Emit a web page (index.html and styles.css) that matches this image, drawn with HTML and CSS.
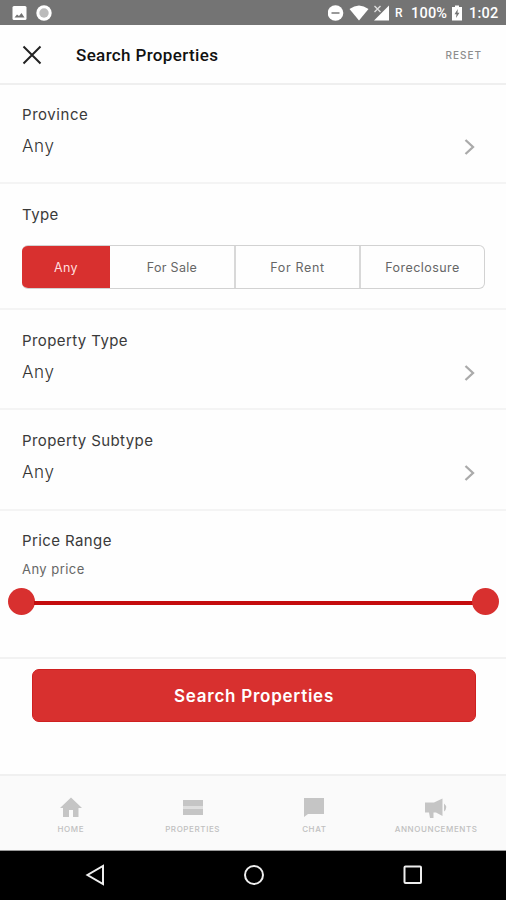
FILE: index.html
```html
<!DOCTYPE html>
<html lang="en">
<head>
<meta charset="utf-8">
<title>Search Properties</title>
<link rel="stylesheet" href="styles.css">
</head>
<body>
<div class="status">
  <svg class="status-left" width="60" height="25" viewBox="0 0 60 25">
    <rect x="12.5" y="6" width="14" height="14" rx="1.5" fill="#fff"/>
    <path d="M14.500 17.500l2.500-3 2 1.500 2.500-3 3 4.500z" fill="#747474"/>
    <circle cx="44" cy="13" r="7.7" fill="#fff"/>
    <circle cx="44" cy="13" r="4.7" fill="#bbb"/>
  </svg>
  <svg class="status-icons" width="66" height="25" viewBox="0 0 66 25">
    <circle cx="7.500" cy="13" r="7.800" fill="#fff"/>
    <path d="M3.500 13h8" stroke="#999" stroke-width="2"/>
    <path d="M21.500 9q9.500-7 19 0l-9.500 11.500z" fill="#fff"/>
    <path d="M61 5.500V20.500H46z" fill="#fff"/>
    <path d="M46.500 6l6 6m0-6l-6 6" stroke="#ddd" stroke-width="1.400"/>
  </svg>
  <span class="roam">R</span>
  <span class="percent">100%</span>
  <svg class="battery" width="10" height="25" viewBox="0 0 10 25">
    <path d="M3 5.500h4V7h3v13.500H0V7h3z" fill="#fff"/>
    <path d="M5.800 9L2.500 14.200h2L4 18l3.500-5.200h-2z" fill="#747474"/>
  </svg>
  <span class="clock">1:02</span>
</div>
<header class="header">
  <svg class="close" width="20" height="20" viewBox="0 0 20 20"><path d="M1.500 1.500l17 17m0-17l-17 17" stroke="#222" stroke-width="2"/></svg>
  <h1 class="title">Search Properties</h1>
  <span class="reset">RESET</span>
</header>
<main>
  <section class="row">
    <div><div class="label province">Province</div><div class="value">Any</div></div>
    <svg class="chevron" width="12" height="18" viewBox="0 0 12 18"><path d="M1.500 2l7.500 7-7.500 7" fill="none" stroke="#aaa" stroke-width="2.300"/></svg>
  </section>
  <section class="type">
    <div class="label">Type</div>
    <div class="segments">
      <span class="seg active">Any</span>
      <span class="seg">For Sale</span>
      <span class="seg rent">For Rent</span>
      <span class="seg foreclosure">Foreclosure</span>
    </div>
  </section>
  <section class="row lower">
    <div><div class="label">Property Type</div><div class="value">Any</div></div>
    <svg class="chevron" width="12" height="18" viewBox="0 0 12 18"><path d="M1.500 2l7.500 7-7.500 7" fill="none" stroke="#aaa" stroke-width="2.300"/></svg>
  </section>
  <section class="row lower subtype">
    <div><div class="label">Property Subtype</div><div class="value">Any</div></div>
    <svg class="chevron" width="12" height="18" viewBox="0 0 12 18"><path d="M1.500 2l7.500 7-7.500 7" fill="none" stroke="#aaa" stroke-width="2.300"/></svg>
  </section>
  <section class="price">
    <div class="label">Price Range</div>
    <div class="price-value">Any price</div>
    <div class="slider"><span class="knob"></span><span class="track"></span><span class="knob"></span></div>
  </section>
  <div class="action"><div class="button">Search Properties</div></div>
</main>
<nav class="tabs">
  <div class="tab"><svg width="24" height="24" viewBox="0 0 24 24"><path d="M10 21v-7h4v7h5.500v-9H23L12 1.500 1 12h3v9z"/></svg><span>HOME</span></div>
  <div class="tab"><svg width="24" height="24" viewBox="0 0 24 24"><path d="M2 4h20v6H2zM2 12.500h20V19H2z"/><path d="M2 10h20v2.500H2z" fill="#dedede"/></svg><span>PROPERTIES</span></div>
  <div class="tab"><svg width="24" height="24" viewBox="0 0 24 24"><path d="M2 2h20v16H6l-4 3z"/></svg><span>CHAT</span></div>
  <div class="tab"><svg width="24" height="24" viewBox="0 0 24 24"><path d="M1 6.500h9l8.500-4V20L12 16.500H9.500V22H6l-1-5.500H1zM20 7.500q4.500 4 0 8z"/></svg><span>ANNOUNCEMENTS</span></div>
</nav>
<div class="navbar">
  <svg width="20" height="22" viewBox="0 0 20 22"><path d="M18 2v18L2.500 11z"/></svg>
  <svg width="22" height="22" viewBox="0 0 22 22"><circle cx="11" cy="11" r="9"/></svg>
  <svg width="20" height="22" viewBox="0 0 20 22"><rect x="1.500" y="2.500" width="16.500" height="16.500" rx="1"/></svg>
</div>
</body>
</html>
```

FILE: styles.css
```css
* { box-sizing: border-box; }
body { margin: 0; width: 506px; height: 900px; overflow: hidden; background: #fefefe; color: #3c3c3c; font-family: Inter, "Liberation Sans", sans-serif; }
svg { display: block; flex: none; }
.status { height: 25px; background: #747474; display: flex; align-items: center; color: #fff; font: 500 14.5px/25px Roboto, sans-serif; padding-right: 8px; white-space: nowrap; }
.status-icons { margin-left: auto; }
.roam { font-size: 12px; margin-left: 1px; width: 15px; padding-top: 2px; }
.percent { width: 42px; padding: 2px 0 0 1px; letter-spacing: .2px; }
.clock { padding: 2px 0 0; margin-left: 7px; width: 29px; letter-spacing: .2px; }
.header { height: 60px; border-bottom: 2px solid #efefef; display: flex; align-items: center; padding: 1px 24px 0 22px; }
.title { margin: 0 0 0 34px; font: 500 17px/24px Roboto, sans-serif; letter-spacing: .36px; color: #111; }
.reset { margin-left: auto; font-size: 10px; font-weight: 500; letter-spacing: 1px; color: #8d8d8d; }
.row { height: 99px; border-bottom: 2px solid #f4f4f4; padding: 18px 30px 0 22px; display: flex; justify-content: space-between; }
.chevron { margin-top: 35px; }
.label { font-size: 15px; line-height: 24px; letter-spacing: .4px; color: #3a3a3a; white-space: nowrap; }
.province { letter-spacing: .55px; }
.value { font-size: 17px; line-height: 24px; margin-top: 7px; letter-spacing: .6px; font-weight: 300; color: #333; }
.type { height: 126px; border-bottom: 2px solid #f4f4f4; padding: 19px 21px 0 22px; }
.segments { margin-top: 18px; height: 44px; border: 1.5px solid #d2d2d2; border-left: 0; border-radius: 6px; overflow: hidden; display: grid; grid-template-columns: 88px 126px 125px 1fr; font-size: 12.5px; color: #666; letter-spacing: .3px; }
.seg { display: flex; align-items: center; justify-content: center; border-right: 2px solid #d8d8d8; }
.seg:last-child { border-right: 0; }
.seg.active { margin: -1px 0; background: #d8302f; color: #ffdede; border-right: 0; }
.rent { letter-spacing: .65px; }
.foreclosure { letter-spacing: .45px; }
.lower { height: 100px; padding-top: 19px; }
.subtype { height: 101px; }
.price { height: 148px; border-bottom: 2px solid #f2f2f2; padding-top: 18px; }
.price .label, .price-value { margin-left: 22px; }
.price-value { font-size: 13px; line-height: 20px; margin-top: 6px; letter-spacing: .45px; color: #666; }
.slider { display: flex; align-items: center; margin: 9px 7px 0 8px; height: 26px; }
.knob { width: 27px; height: 27px; border-radius: 50%; background: #d8302f; flex: none; }
.track { flex: 1; height: 4px; background: #c40c0d; margin: 3px -1px 0; }
.action { height: 115px; padding: 10px 30px 0 32px; }
.button { height: 53px; border-radius: 7px; background: #d8302f; border: 1px solid #cf2020; color: #fff; font-size: 17px; font-weight: 600; letter-spacing: .75px; display: flex; align-items: center; justify-content: center; }
.tabs { height: 77px; border-top: 2px solid #f0f0f0; border-bottom: 1px solid #999; background: #fafafa; display: flex; padding: 20px 9px 0 10px; }
.tab { flex: 1; display: flex; flex-direction: column; align-items: center; font-size: 8px; line-height: 12px; letter-spacing: .6px; font-weight: 500; color: #c0c0c0; }
.tab svg { fill: #c5c5c5; }
.tab span { margin-top: 3px; }
.navbar { height: 49px; background: #000; display: flex; justify-content: space-between; padding: 13px 83px 0 85px; }
.navbar svg { fill: none; stroke: #eee; stroke-width: 2; }
```
